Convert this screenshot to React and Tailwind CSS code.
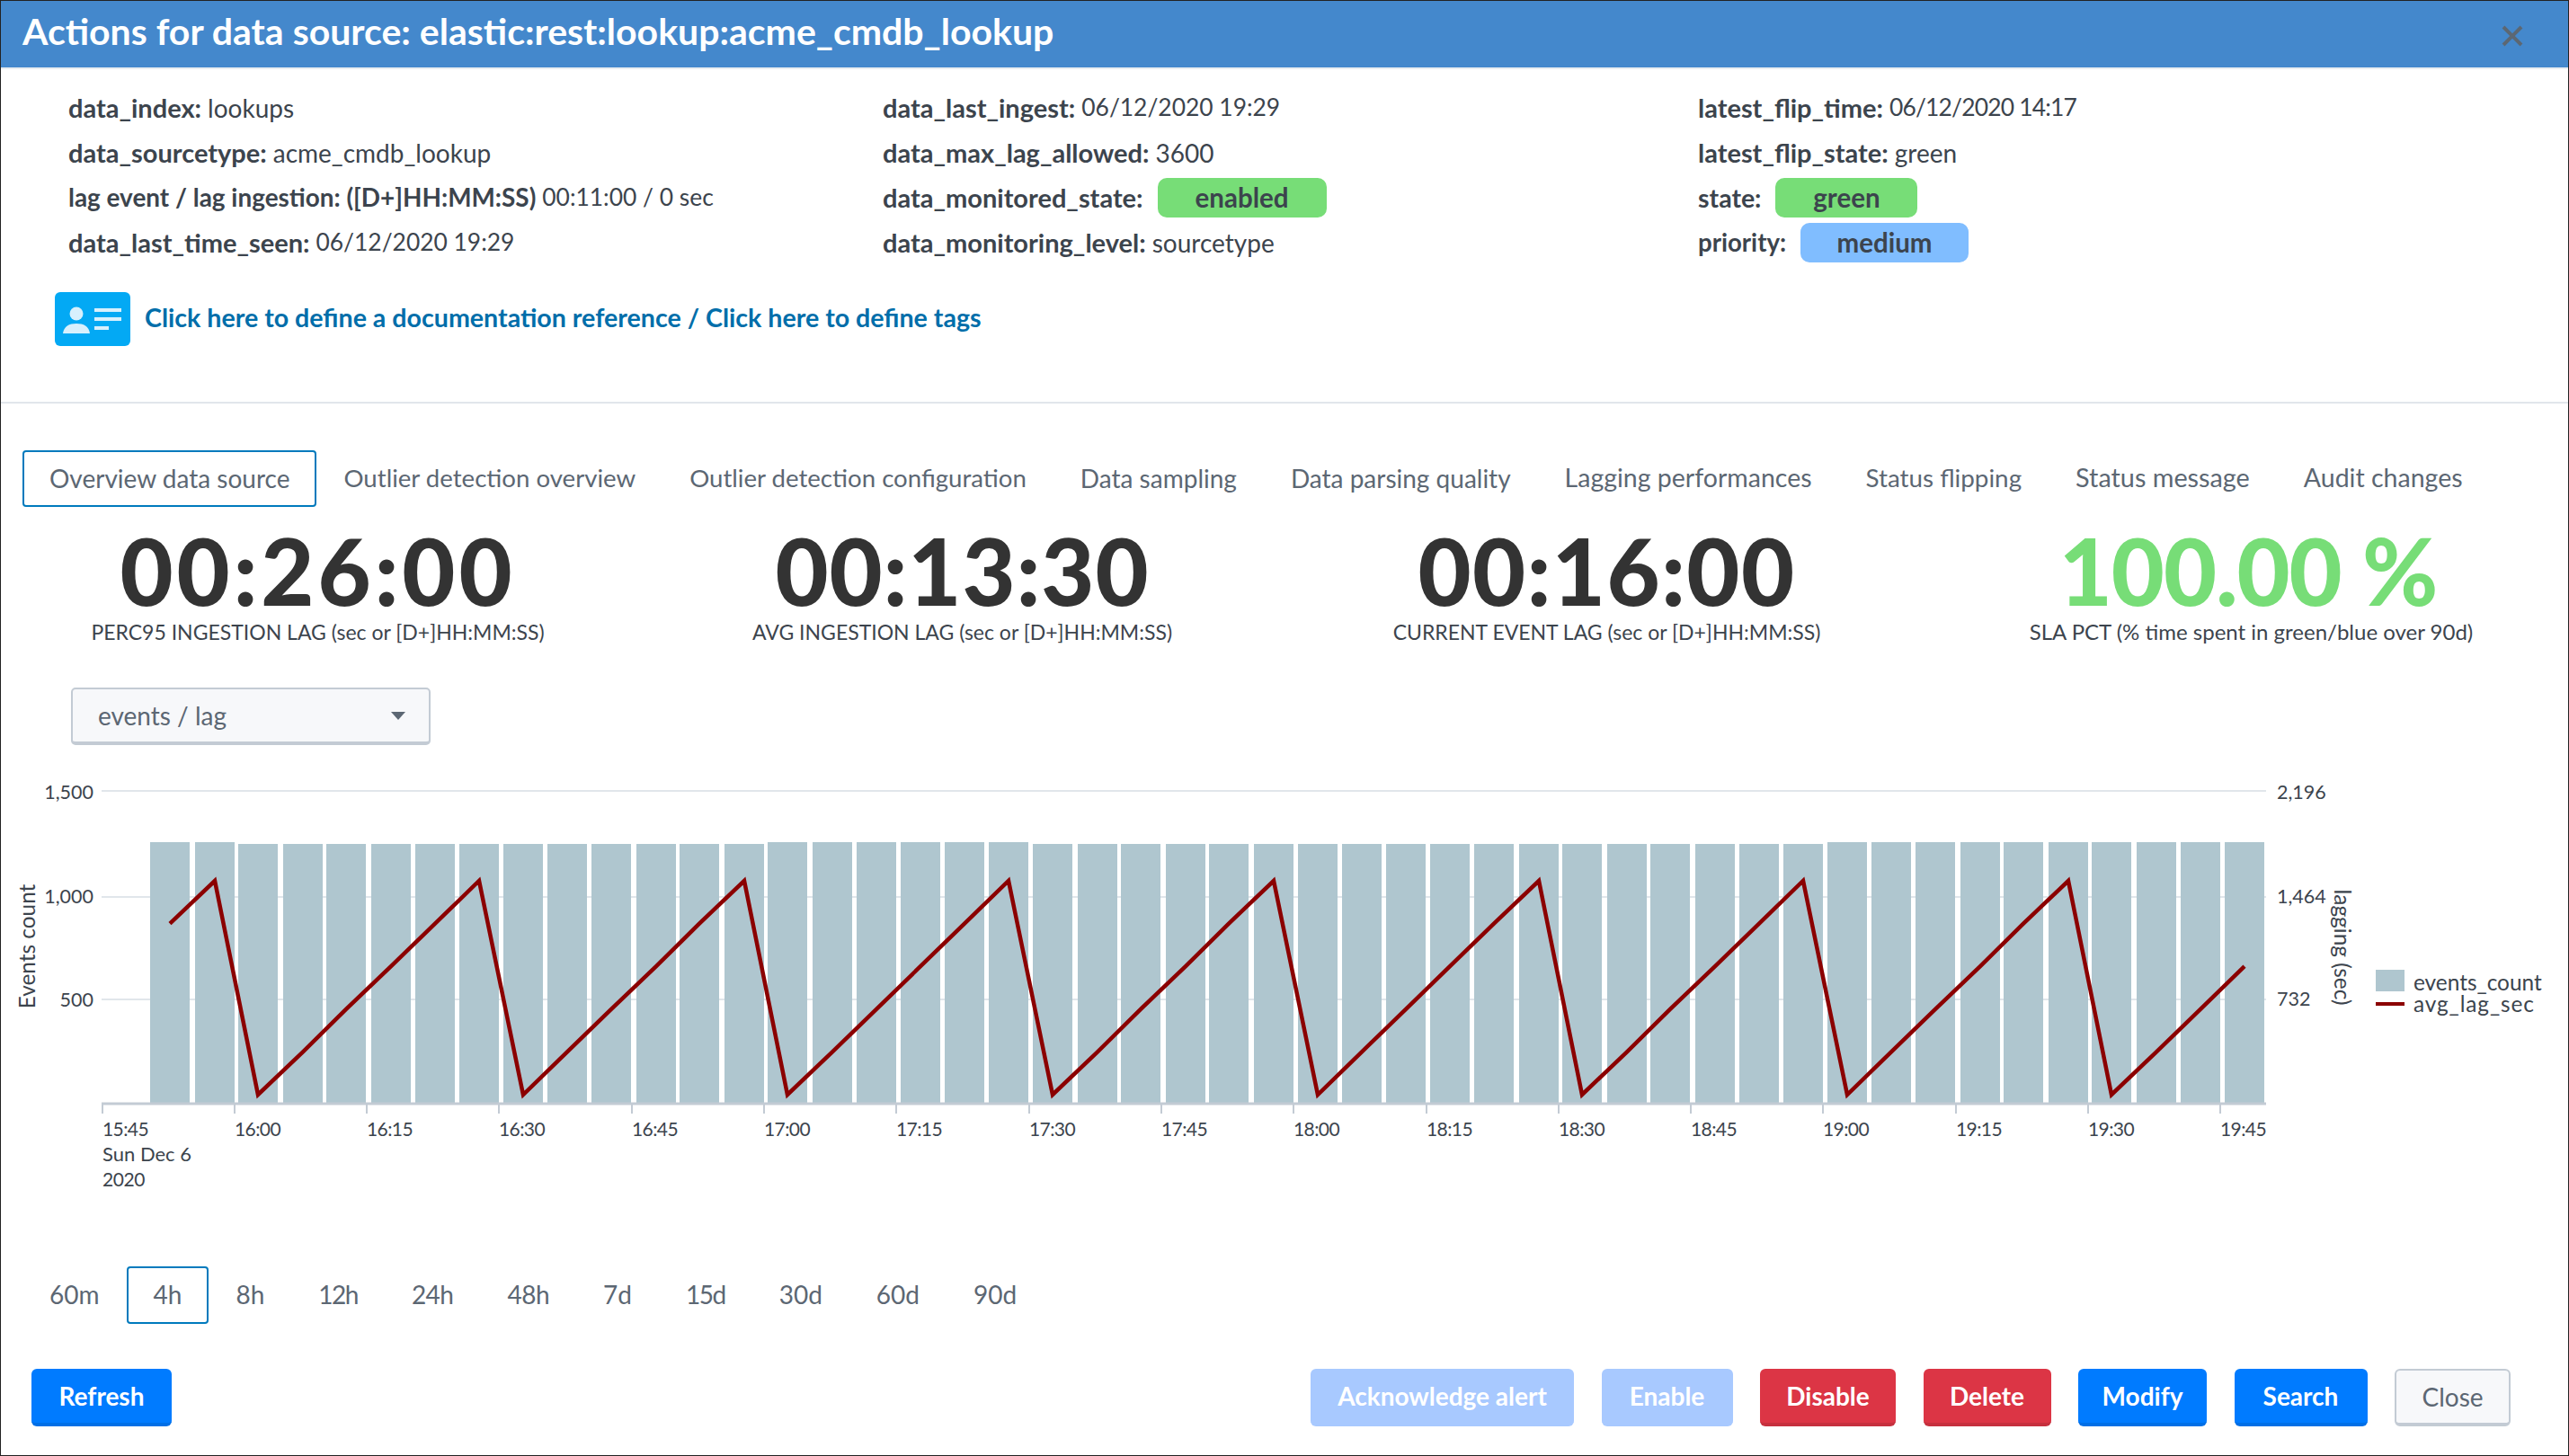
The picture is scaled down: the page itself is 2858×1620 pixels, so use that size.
import React from "react";

const tabs = [
  ["Overview data source", "text-[28px]"],
  ["Outlier detection overview", "text-[27.6px]"],
  ["Outlier detection configuration", "text-[27.6px]"],
  ["Data sampling", "text-[28px]"],
  ["Data parsing quality", "text-[28px]"],
  ["Lagging performances", "text-[28.5px]"],
  ["Status flipping", "text-[27.8px]"],
  ["Status message", "text-[28.8px]"],
  ["Audit changes", "text-[28.5px]"],
];

const stats = [
  ["00:26:00", "PERC95 INGESTION LAG (sec or [D+]HH:MM:SS)", "text-[#333333] tracking-[4px]", "text-[23px]"],
  ["00:13:30", "AVG INGESTION LAG (sec or [D+]HH:MM:SS)", "text-[#333333] tracking-[1px]", "text-[23px]"],
  ["00:16:00", "CURRENT EVENT LAG (sec or [D+]HH:MM:SS)", "text-[#333333] tracking-[1.5px]", "text-[23px]"],
  ["100.00 %", "SLA PCT (% time spent in green/blue over 90d)", "text-[#77dd77] tracking-[-1px] mr-[7px]", "text-[24px]"],
];

const ranges = [
  ["60m", ""],
  ["4h", ""],
  ["8h", ""],
  ["12h", "tracking-[-1.5px]"],
  ["24h", "tracking-[-0.5px]"],
  ["48h", "tracking-[-0.5px]"],
  ["7d", ""],
  ["15d", "tracking-[-1.5px]"],
  ["30d", ""],
  ["60d", ""],
  ["90d", ""],
];

const ticks = [
  "15:45", "16:00", "16:15", "16:30", "16:45", "17:00", "17:15", "17:30", "17:45",
  "18:00", "18:15", "18:30", "18:45", "19:00", "19:15", "19:30", "19:45",
];

const barLeft = (i) => Math.round(167 + i * 49.1 + (i % 2 ? 0.4 : 0));
const isTall = (i) => i < 2 || (i >= 14 && i < 20) || i >= 38;

// sawtooth: trough at i=2, peak at i=7, repeats every 6 bars
const lagY = (i) => {
  const phase = (i - 2 + 6) % 6;
  return phase === 5 ? 980 : 1218 - phase * 47.6;
};
const linePoints = Array.from({ length: 48 }, (_, i) => `${barLeft(i) + 22},${lagY(i)}`).join(" ");

const Chart = () => (
  <svg viewBox="1 829 2856 580" className="block w-[2856px] h-[580px] shrink-0">
    <g stroke="#e1e6eb" strokeWidth="2">
      <line x1="113" x2="2521" y1="880" y2="880" />
      <line x1="113" x2="2521" y1="998" y2="998" />
      <line x1="113" x2="2521" y1="1112" y2="1112" />
    </g>
    {Array.from({ length: 48 }, (_, i) => (
      <rect key={i} x={barLeft(i)} y={isTall(i) ? 937 : 939} width="44" height={isTall(i) ? 290 : 288} fill="#afc6cf" />
    ))}
    <line x1="113" x2="2521" y1="1228" y2="1228" stroke="#c3cbd4" strokeWidth="3" />
    {ticks.map((t, i) => {
      const x = Math.round(113.5 + i * 147.3);
      return (
        <g key={t}>
          <line x1={x} x2={x} y1="1228" y2="1239" stroke="#c3cbd4" strokeWidth="2" />
          <text x={x} y="1264" fontSize="21" letterSpacing="-0.6" fill="#3c444d">{t}</text>
        </g>
      );
    })}
    <text x="114" y="1292" fontSize="22" fill="#3c444d">Sun Dec 6</text>
    <text x="114" y="1320" fontSize="21" letterSpacing="-0.4" fill="#3c444d">2020</text>
    <polyline points={linePoints} fill="none" stroke="#8b0000" strokeWidth="4.5" />
    <g fontSize="21.5" fill="#3c444d">
      <text x="104" y="889" textAnchor="end">1,500</text>
      <text x="104" y="1005" textAnchor="end">1,000</text>
      <text x="104" y="1120" textAnchor="end">500</text>
      <text x="2533" y="889">2,196</text>
      <text x="2533" y="1005">1,464</text>
      <text x="2533" y="1119">732</text>
    </g>
    <g fontSize="24.4" fill="#3c444d">
      <text transform="translate(39 1053) rotate(-90)" textAnchor="middle">Events count</text>
      <text transform="translate(2597 1054) rotate(90)" textAnchor="middle">lagging (sec)</text>
      <text x="2685" y="1102">events_count</text>
      <text x="2685" y="1126" letterSpacing="0.9">avg_lag_sec</text>
    </g>
    <rect x="2643" y="1079" width="32" height="24" fill="#afc6cf" />
    <rect x="2643" y="1115" width="32" height="4" fill="#8b0000" />
  </svg>
);

const Badge = ({ className, children }) => (
  <span className={`inline-flex items-center justify-center h-[44px] rounded-[10px] font-bold text-[29.5px] text-[#3c444d] ml-[16px] ${className}`}>
    {children}
  </span>
);

const Row = ({ label, value, valueClass = "text-[28px]", labelClass = "text-[29px]", children }) => (
  <div className="flex items-center h-[50px] whitespace-nowrap">
    <span className={`font-bold ${labelClass}`}>{label}</span>
    {value && <span className={`ml-[7px] ${valueClass}`}>{value}</span>}
    {children}
  </div>
);

const ActionButton = ({ className, children }) => (
  <button className={`h-[64px] flex items-center justify-center rounded-[6px] text-[28px] ${className}`}>
    {children}
  </button>
);

const App = () => {
  return (
    <div className="w-[2858px] h-[1620px] border border-[#222222] bg-white flex flex-col overflow-hidden font-['Lato',sans-serif] text-[28px] text-[#3c444d]">
      {/* Header */}
      <div className="h-[76px] shrink-0 bg-[#4488cc] border-b-2 border-[#e9eef1] flex items-center justify-between pl-[24px] pr-[50px] pb-[6px]">
        <h1 className="text-[41px] font-bold text-white">Actions for data source: elastic:rest:lookup:acme_cmdb_lookup</h1>
        <svg width="24" height="24" viewBox="0 0 24 24" className="mt-[10px]">
          <path d="M2 2 L22 22 M22 2 L2 22" stroke="#5c6773" strokeWidth="4" />
        </svg>
      </div>

      {/* Info */}
      <div className="grid grid-cols-[906px_907px_1fr] pl-[75px] pt-[18px] shrink-0">
        <div>
          <Row label="data_index:" value="lookups" />
          <Row label="data_sourcetype:" value="acme_cmdb_lookup" />
          <Row labelClass="text-[27.9px]" label="lag event / lag ingestion: ([D+]HH:MM:SS)" value="00:11:00 / 0 sec" valueClass="text-[26.4px]" />
          <Row label="data_last_time_seen:" value="06/12/2020 19:29" valueClass="text-[26.4px]" />
        </div>
        <div>
          <Row label="data_last_ingest:" value="06/12/2020 19:29" valueClass="text-[26.4px]" />
          <Row label="data_max_lag_allowed:" value="3600" />
          <Row label="data_monitored_state:">
            <Badge className="w-[188px] bg-[#77dd77]">enabled</Badge>
          </Row>
          <Row label="data_monitoring_level:" value="sourcetype" />
        </div>
        <div>
          <Row label="latest_flip_time:" value="06/12/2020 14:17" valueClass="text-[26.4px] tracking-[-0.8px]" />
          <Row label="latest_flip_state:" value="green" />
          <Row label="state:" labelClass="text-[28.5px]">
            <Badge className="w-[158px] bg-[#77dd77]">green</Badge>
          </Row>
          <Row label="priority:" labelClass="text-[27.6px]">
            <Badge className="w-[187px] bg-[#80bdff]">medium</Badge>
          </Row>
        </div>
      </div>

      {/* Links */}
      <div className="flex items-center pl-[60px] mt-[30px] shrink-0">
        <svg width="84" height="60" viewBox="0 0 84 60" className="shrink-0">
          <rect width="84" height="60" rx="6" fill="#03a9f4" />
          <circle cx="24" cy="24" r="7.5" fill="#d7f0fd" />
          <path d="M9 46 C10 38 16 35 24 35 C32 35 38 38 39 46 Z" fill="#d7f0fd" />
          <path d="M44 18 H74 V22 H44 Z M44 28 H74 V32 H44 Z M44 38 H60 V42 H44 Z" fill="#d7f0fd" />
        </svg>
        <div className="ml-[16px] -mt-[3px] font-bold text-[28.6px] text-[#006eaa]">
          Click here to define a documentation reference / Click here to define tags
        </div>
      </div>

      <div className="h-[2px] bg-[#e1e6eb] mt-[62px] shrink-0" />

      {/* Tabs */}
      <div className="flex pl-[24px] mt-[52px] shrink-0">
        {tabs.map(([t, size], i) => (
          <div
            key={t}
            className={`h-[63px] px-[28px] pb-[2px] flex items-center border-2 rounded-[4px] whitespace-nowrap text-[#5c6773] ${size} ${i === 0 ? "border-[#007abd]" : "border-transparent"}`}
          >
            {t}
          </div>
        ))}
      </div>

      {/* Stats */}
      <div className="grid grid-cols-4 w-[2868px] -ml-[6px] mt-[19px] shrink-0">
        {stats.map(([value, label, color, size]) => (
          <div key={label} className="flex flex-col items-center">
            <div className={`text-[102px] leading-[104px] font-black whitespace-nowrap ${color}`}>{value}</div>
            <div className={`leading-[32px] whitespace-nowrap ${size}`}>{label}</div>
          </div>
        ))}
      </div>

      {/* Dropdown */}
      <div className="ml-[78px] mt-[46px] w-[400px] h-[64px] shrink-0 rounded-[5px] border-2 border-b-4 border-[#c3cbd4] bg-[#f7f8fa] flex items-center justify-between pl-[28px] pr-[26px] text-[#5c6773]">
        <span>events / lag</span>
        <svg width="16" height="9" viewBox="0 0 16 9"><path d="M0 0 H16 L8 9 Z" fill="#5c6773" /></svg>
      </div>

      <Chart />

      {/* Time ranges */}
      <div className="flex pl-[24px] shrink-0">
        {ranges.map(([r, spacing]) => (
          <div
            key={r}
            className={`h-[64px] px-[28px] pb-[2px] flex items-center border-2 rounded-[4px] text-[#5c6773] ${spacing} ${r === "4h" ? "border-[#007abd]" : "border-transparent"}`}
          >
            {r}
          </div>
        ))}
      </div>

      {/* Footer buttons */}
      <div className="flex justify-between items-center pl-[34px] pr-[64px] mt-[50px] shrink-0">
        <ActionButton className="w-[156px] font-bold bg-[#007bff] border-b-4 border-[#006fe6] text-white">Refresh</ActionButton>
        <div className="flex gap-[30.5px]">
          <ActionButton className="w-[293px] font-bold bg-[#a8c9ff] border-b-4 border-[#a8c9ff] text-white">Acknowledge alert</ActionButton>
          <ActionButton className="w-[146px] font-bold bg-[#a8c9ff] border-b-4 border-[#a8c9ff] text-white">Enable</ActionButton>
          <ActionButton className="w-[151px] font-bold bg-[#dc3545] border-b-4 border-[#c6303e] text-white">Disable</ActionButton>
          <ActionButton className="w-[142px] font-bold bg-[#dc3545] border-b-4 border-[#c6303e] text-white">Delete</ActionButton>
          <ActionButton className="w-[143px] font-bold bg-[#007bff] border-b-4 border-[#006fe6] text-white">Modify</ActionButton>
          <ActionButton className="w-[148px] font-bold bg-[#007bff] border-b-4 border-[#006fe6] text-white">Search</ActionButton>
          <ActionButton className="w-[129px] bg-[#f7f8fa] border-2 border-b-4 border-[#c3cbd4] text-[#5c6773]">Close</ActionButton>
        </div>
      </div>
    </div>
  );
};

export default App;
